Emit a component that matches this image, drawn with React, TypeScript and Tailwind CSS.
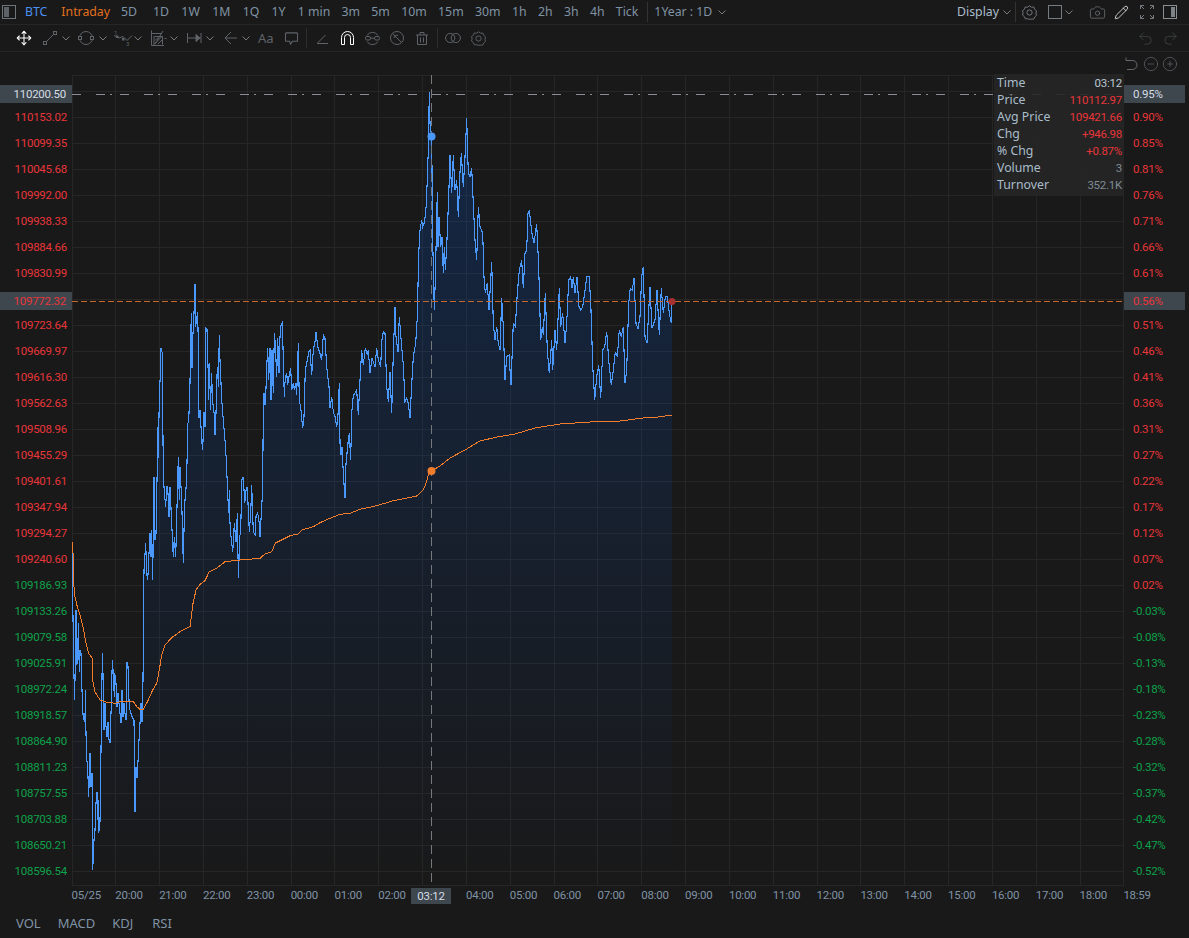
import { Camera, CircleMinus, CirclePlus, Pencil, Redo2, Undo2, Move } from 'lucide-react'

const leftLabels = [
  '110153.02', '110099.35', '110045.68', '109992.00', '109938.33', '109884.66', '109830.99', '',
  '109723.64', '109669.97', '109616.30', '109562.63', '109508.96', '109455.29', '109401.61', '109347.94',
  '109294.27', '109240.60', '109186.93', '109133.26', '109079.58', '109025.91', '108972.24', '108918.57',
  '108864.90', '108811.23', '108757.55', '108703.88', '108650.21', '108596.54',
]
const rightLabels = [
  '0.90%', '0.85%', '0.81%', '0.76%', '0.71%', '0.66%', '0.61%', '',
  '0.51%', '0.46%', '0.41%', '0.36%', '0.31%', '0.27%', '0.22%', '0.17%',
  '0.12%', '0.07%', '0.02%', '-0.03%', '-0.08%', '-0.13%', '-0.18%', '-0.23%',
  '-0.28%', '-0.32%', '-0.37%', '-0.42%', '-0.47%', '-0.52%',
]
const times = [
  '05/25', '20:00', '21:00', '22:00', '23:00', '00:00', '01:00', '02:00', '', '04:00', '05:00', '06:00',
  '07:00', '08:00', '09:00', '10:00', '11:00', '12:00', '13:00', '14:00', '15:00', '16:00', '17:00', '18:00',
]
const info = [
  ['Time', '03:12', 'text-[#b9c6d2]'],
  ['Price', '110112.97', 'text-[#e8363a]'],
  ['Avg Price', '109421.66', 'text-[#e8363a]'],
  ['Chg', '+946.98', 'text-[#e8363a]'],
  ['% Chg', '+0.87%', 'text-[#e8363a]'],
  ['Volume', '3', 'text-[#7f8b96]'],
  ['Turnover', '352.1K', 'text-[#7f8b96]'],
]

// traced from the chart, 3 units per pixel
const trace = (ox: number, oy: number, s: string) => {
  const n = s.trim().split(/\s+/).map(Number)
  const out: [number, number][] = []
  for (let i = 0; i < n.length; i += 2) out.push([ox + n[i] / 3, oy + n[i + 1] / 3])
  return out
}

const pricePts = [
  ...trace(0, 540, `218 30 218 180 222 410 224 480 228 210 230 375 233 360 235 250 238 395 240 330 243 340 246 450 248 500 250 540
    253 520 255 545 256 450 258 580 260 650 264 710 266 770 270 640 273 740 276 700 277 778 278 990 282 900 285 870 288 790 291 755
    293 840 295 780 296 880 300 845 303 630 305 490 307 340 310 430 312 570 315 490 318 560 321 590 324 545 327 600 330 610 333 520
    337 360 340 400 343 470 344 400 348 430 351 500 354 460 357 490 360 520 363 550 366 450 369 530 372 490 375 520 378 540 381 365
    384 380 387 480 390 510 393 520 396 530 402 540 405 815 408 680 411 715 414 665 417 600 420 550 423 490 426 545 429 420`),
  ...trace(130, 280, `42 870 47 790 50 880 53 900 60 760 63 830 65 750 68 900 72 590 75 780 78 760 84 440 85 535 88 350 91 283 93 205 97 220
    100 590 104 650 107 680 110 620 113 620 117 710 120 620 125 730 130 830 133 770 137 830 145 530 148 660 150 560 155 660 160 850
    163 710 165 660 170 600 173 430 176 425 180 310 182 150 185 100 186 265 188 180 192 100 195 12 197 140 200 115 203 95 205 195
    207 415 210 390 213 440 216 490 218 510 222 395 225 440 228 145 232 150 236 360 238 250 242 390 244 280 246 315 250 390 253 400
    255 465 258 400 260 295 263 260 265 320 268 165 270 240 273 310 276 370 280 420 285 480 289 540 293 640 296 700 298 630 300 730
    303 770 308 815 310 790 313 730 318 785 322 700 324 830 326 895 328 770 332 760 335 600 340 590 344 670 348 630 352 620 355 690
    358 755 362 700 365 615 370 755 375 765 378 710 382 700 386 710 390 770 395 680 398 625 400 380 402 340 405 375 408 325 410 260
    413 205 416 300 420 205 423 360 426 210 430 340 433 160 436 190 440 290 443 175 447 280 450 170 453 135 457 128 460 235 463 350
    466 290 470 280 473 315 478 285 482 265 485 330 490 310 493 330 497 310 500 345 505 190 508 365 512 380 515 415 518 445 522 410
    526 270 530 250 533 235 536 215 540 210 545 285 550 210 555 185 558 155 563 200 570 220 575 240 580 165 585 175 590 260 597 320
    600 385 605 350 610 395 615 410 620 440 623 425 628 310 630 490 633 525 636 500 640 580 645 655 648 550 655 480 658 460 662 540
    665 400 670 345 675 340 680 330 685 405 690 300 695 210 700 255 706 205 712 225 715 210 720 280 726 235 735 260 740 205 745 240
    752 260 755 185 760 155 765 160 770 320 775 365 780 275 785 400 790 220 795 80 798 170 804 215 808 110 815 200 820 255 825 365
    830 355 835 370 840 415`),
  ...trace(410, 80, `5 915 10 830 17 790 22 710 26 520 30 450 35 420 38 440 42 430 47 400 50 345 55 210 58 35 60 130 65 170 68 480 73 690 76 600
    82 335 84 500 87 410 92 500 96 470 100 580 103 500 106 570 110 500 116 350 120 225 125 340 130 225 135 330 140 300 145 410 150 275
    154 220 160 320 165 230 170 115 175 280 180 290 185 265 190 370 195 480 200 540 205 380 210 440 218 460 222 590 226 640 232 610
    237 690 245 545 250 730 255 780 260 740 265 790 270 810 275 655 280 740 285 900 290 830 297 825 303 915 310 730 316 740 322 640
    328 570 335 540 340 625 345 520 350 510 354 400 358 390 365 455 372 490 380 432 386 560 392 780 397 740 400 765 406 640 412 810
    418 880 425 780 428 870 435 750 440 810 448 625 452 740 458 700 465 790 470 730 476 600 482 590 486 625 490 590 495 640 501 590
    507 680 512 690 518 680 524 640 530 590 538 590 543 690 548 855 554 960 560 890 566 855 572 955 578 810 584 800 590 755 597 850
    604 915 610 870 616 815 622 830 628 750 634 770 640 740 645 910 650 870 656 670 661 625 667 630 672 595 678 730 684 745 690 710
    695 590 700 560 705 770 711 790 720 620 726 745 735 720 741 630 748 765 754 625 760 700 766 650 772 650 778 700 784 730 786 670`),
]

const avgPts = [
  ...trace(0, 540, `218 5 222 140 225 170 232 200 240 225 250 265 258 310 266 340 277 355 278 420 285 455 300 480 320 487 345 490 365 484
    400 484 410 500 420 508 430 508 445 480 458 450 470 430 478 390 485 345 495 315 515 293 540 275 570 260 578 195 588 150 600 133
    615 122 628 95 650 85 675 65 720 60 780 55 795 42 815 35 825 12`),
  ...trace(130, 280, `435 790 480 767 505 762 515 750 550 740 570 728 600 715 630 703 660 700 690 688 740 677 790 662 860 648 880 630 890 605 897 575`),
  [431, 471], [440, 466], [450, 458], [465, 450], [480, 441], [497, 437], [515, 434], [535, 428], [560, 424], [590, 422], [620, 421],
  [643, 418], [658, 417], [672, 415],
] as [number, number][]

const toPath = (pts: [number, number][]) => pts.map(([x, y], i) => `${i ? 'L' : 'M'}${x.toFixed(1)} ${y.toFixed(1)}`).join(' ')
const pricePath = toPath(pricePts)
const areaPath = `${pricePath} L672 886 L73 886 Z`

const hLines = Array.from({ length: 31 }, (_, i) => 91.5 + i * 26)
const vLines = Array.from({ length: 25 }, (_, i) => Math.floor(72 + i * 43.83) + 0.5)

function Chev({ className = '' }: { className?: string }) {
  return (
    <svg viewBox="0 0 8 5" fill="none" stroke="#767b80" className={`w-[8px] h-[5px] shrink-0 ${className}`}>
      <path d="M.5.5 4 4 7.5.5" />
    </svg>
  )
}

function Gear({ className = '' }: { className?: string }) {
  return (
    <svg viewBox="0 0 16 16" fill="none" stroke="currentColor" strokeLinejoin="round" className={`shrink-0 ${className}`}>
      <path d="M8 .8 10 2.3l2.6-.1.9 2.4 2 1.7-.7 2.5.7 2.3-2 1.7-.9 2.2-2.6.1L8 15.2l-2-.5-2.6-.1-.9-2.2-2-1.7.7-2.3L.5 6l2-1.4.9-2.4L6 2.3Z" />
      <circle cx="8" cy="8" r="2.8" />
    </svg>
  )
}

function Toolbar() {
  return (
    <div className="h-[25px] shrink-0 flex items-center border-b border-[#262626] text-[12.3px] text-[#8093a5]">
      <svg viewBox="0 0 14 14" className="w-[14px] h-[14px] ml-[2px] shrink-0">
        <rect x="0.5" y="0.5" width="13" height="13" fill="none" stroke="#6e747a" />
        <rect x="2" y="2" width="5" height="10" fill="#5c6268" />
      </svg>
      <span className="ml-[9px] text-[#4a90f0]">BTC</span>
      <span className="ml-[14px] text-[#e2701d]">Intraday</span>
      <span className="ml-[11px] mr-[4px]">5D</span>
      <div className="flex gap-[12.3px] ml-3">
        {['1D', '1W', '1M', '1Q', '1Y', '1 min'].map((t) => (
          <span key={t}>{t}</span>
        ))}
      </div>
      <div className="flex gap-[11.35px] ml-[11px]">
        {['3m', '5m', '10m', '15m', '30m', '1h', '2h', '3h', '4h', 'Tick'].map((t) => (
          <span key={t}>{t}</span>
        ))}
      </div>
      <div className="w-px h-[20px] bg-[#333] ml-[9px]" />
      <span className="ml-[6px]">1Year : 1D</span>
      <Chev className="ml-[6px]" />
      <span className="ml-auto text-[#a9bccb]">Display</span>
      <Chev className="ml-[4px]" />
      <div className="w-px h-[20px] bg-[#333] ml-[4px]" />
      <Gear className="w-[15px] h-[15px] ml-[6px] text-[#767b80]" />
      <svg viewBox="0 0 14 14" className="w-[14px] h-[14px] ml-[11px] shrink-0">
        <rect x="0.5" y="0.5" width="13" height="13" fill="none" stroke="#767b80" />
      </svg>
      <Chev className="ml-[3px]" />
      <Camera strokeWidth={1} className="w-[17px] h-[17px] ml-[16px] shrink-0 text-[#767b80]" />
      <Pencil strokeWidth={1.2} className="w-[15px] h-[15px] ml-[8px] shrink-0 text-white" />
      <svg viewBox="0 0 14 14" fill="none" stroke="#767b80" className="w-[14px] h-[14px] ml-[11px] shrink-0">
        <path d="M.5 4V.5H4M10 .5h3.5V4M.5 10v3.5H4M10 13.5h3.5V10M1 1l3 3M13 1l-3 3M1 13l3-3M13 13l-3-3" />
      </svg>
      <svg viewBox="0 0 14 14" className="w-[14px] h-[14px] ml-[9px] mr-[12px] shrink-0">
        <rect x="0.5" y="0.5" width="13" height="13" fill="none" stroke="#8a8f94" />
        <rect x="8" y="2" width="4" height="10" fill="#7d8287" />
      </svg>
    </div>
  )
}

function DrawingTools() {
  const c = 'shrink-0 text-[#5f6368]'
  return (
    <div className="h-[27px] shrink-0 flex items-center border-b border-[#262626]">
      <Move strokeWidth={1.6} className="w-[16px] h-[16px] ml-[16px] shrink-0 text-white" />
      <svg viewBox="0 0 14 14" fill="none" stroke="currentColor" className={`w-[14px] h-[14px] ml-[11px] ${c}`}>
        <rect x="0.5" y="10.5" width="3" height="3" />
        <rect x="10.5" y="0.5" width="3" height="3" />
        <path d="M3.5 10.5l7-7" />
      </svg>
      <Chev className="ml-[5px]" />
      <svg viewBox="0 0 16 16" fill="none" stroke="currentColor" className={`w-[16px] h-[16px] ml-[8px] ${c}`}>
        <circle cx="8" cy="8" r="6.5" />
        <rect x="0.5" y="6.5" width="3" height="3" fill="#191919" />
        <rect x="12.5" y="6.5" width="3" height="3" fill="#191919" />
      </svg>
      <Chev className="ml-[5px]" />
      <svg viewBox="0 0 20 16" fill="none" stroke="currentColor" className={`w-[20px] h-[16px] ml-[6px] ${c}`}>
        <path d="M1 5.5 6 8l4-1.5 4 4 5-5" />
        <rect x="9" y="8" width="2.5" height="2.5" fill="currentColor" stroke="none" />
        <rect x="3" y="5.5" width="2.5" height="2.5" fill="currentColor" stroke="none" />
        <text x="1" y="4.5" fontSize="6" fill="currentColor" stroke="none" fontFamily="Roboto, sans-serif">1</text>
        <text x="13" y="15.5" fontSize="6" fill="currentColor" stroke="none" fontFamily="Roboto, sans-serif">3</text>
      </svg>
      <Chev className="ml-[1px]" />
      <svg viewBox="0 0 16 16" fill="none" stroke="currentColor" className={`w-[16px] h-[16px] ml-[9px] ${c}`}>
        <path d="M.5.5v15h12.5M.5 3.5h10M3 15V6M3.5 6.5h8v8M3.5 14l8-8M4 10.5l3-3M7 14l4-4M12 1l-8 13M13.5 8.5h2" />
      </svg>
      <Chev className="ml-[3px]" />
      <svg viewBox="0 0 15 14" fill="none" stroke="currentColor" className={`w-[15px] h-[14px] ml-[9px] ${c}`}>
        <path d="M.5 2v10M.5 7h13M14 2v10" />
        <path d="M9 3.5 13 7l-4 3.5Z" fill="currentColor" />
      </svg>
      <Chev className="ml-[4px]" />
      <svg viewBox="0 0 13 14" fill="none" stroke="currentColor" className={`w-[13px] h-[14px] ml-[10px] ${c}`}>
        <path d="M13 7H1M7 1 1 7l6 6" />
      </svg>
      <Chev className="ml-[5px]" />
      <span className="w-[15px] ml-[8px] text-[13px] leading-none text-[#5f6368] shrink-0">Aa</span>
      <svg viewBox="0 0 14 14" fill="none" stroke="currentColor" strokeWidth="1.2" className={`w-[13px] h-[13px] ml-[12px] ${c}`}>
        <path d="M1.5 1h11a1 1 0 0 1 1 1v7a1 1 0 0 1-1 1H8l-2 3-1-3H1.5a1 1 0 0 1-1-1V2a1 1 0 0 1 1-1Z" />
      </svg>
      <div className="w-px h-[20px] bg-[#2e2e2e] ml-[8px] shrink-0" />
      <svg viewBox="0 0 11 11" fill="none" stroke="currentColor" className={`w-[11px] h-[11px] ml-[10px] ${c}`}>
        <path d="M0 10.5h11M.5 10l8-8" />
      </svg>
      <svg viewBox="0 0 13 14" fill="none" stroke="white" className="w-[13px] h-[14px] ml-[13px] shrink-0">
        <path d="M.5 13.5V6.5a6 6 0 0 1 12 0v7H9.5V6.5a3 3 0 0 0-6 0v7Z" />
      </svg>
      <svg viewBox="0 0 15 15" fill="none" stroke="currentColor" className={`w-[15px] h-[15px] ml-[11px] ${c}`}>
        <path d="M2 4.5a6.5 6.5 0 0 1 11 0M2 10.5a6.5 6.5 0 0 0 11 0" />
        <rect x="0.5" y="5.5" width="5" height="3.5" rx="1.5" />
        <rect x="9.5" y="5.5" width="5" height="3.5" rx="1.5" />
        <path d="M5.5 7.2h4" />
      </svg>
      <svg viewBox="0 0 14 14" fill="none" stroke="currentColor" className={`w-[14px] h-[14px] ml-[10px] ${c}`}>
        <circle cx="7" cy="7" r="6.5" />
        <path d="M2.5 2.5l9 9M4 7a3 3 0 0 1 4-2.6" />
      </svg>
      <svg viewBox="0 0 12 13" fill="none" stroke="currentColor" className={`w-[12px] h-[13px] ml-[12px] ${c}`}>
        <path d="M0 3h12M4 3V.5h4V3M1.5 3v9.5h9V3M4.5 5.5v5M7.5 5.5v5" />
      </svg>
      <div className="w-px h-[20px] bg-[#2e2e2e] ml-[9px] shrink-0" />
      <svg viewBox="0 0 16 10" fill="none" stroke="currentColor" className={`w-[16px] h-[10px] ml-[7px] ${c}`}>
        <circle cx="5.2" cy="5" r="4.6" />
        <circle cx="10.8" cy="5" r="4.6" />
      </svg>
      <Gear className="w-[15px] h-[15px] ml-[10px] text-[#5f6368]" />
      <div className="ml-auto mr-[10px] flex gap-2 text-[#3f4245]">
        <Undo2 strokeWidth={1.2} className="w-[17px] h-[17px]" />
        <Redo2 strokeWidth={1.2} className="w-[17px] h-[17px]" />
      </div>
    </div>
  )
}

function PriceChart() {
  return (
    <svg viewBox="72 75 1052 811" className="w-[1052px] h-[811px] block">
      <defs>
        <linearGradient id="area" gradientUnits="userSpaceOnUse" x1="0" y1="92" x2="0" y2="886">
          <stop offset="0" stopColor="#005ae6" stopOpacity="0.22" />
          <stop offset="1" stopColor="#005ae6" stopOpacity="0" />
        </linearGradient>
      </defs>
      <g stroke="#262626" shapeRendering="crispEdges">
        <path d="M72 75.5H1124M72 885.5H1124M1123.5 75V886" fill="none" />
        {hLines.map((y) => (
          <line key={y} x1="72" x2="1124" y1={y} y2={y} />
        ))}
        {vLines.map((x) => (
          <line key={x} x1={x} x2={x} y1="75" y2="886" />
        ))}
      </g>
      <path d={areaPath} fill="url(#area)" />
      <path d={pricePath} fill="none" stroke="#4a98fb" strokeWidth="1.1" shapeRendering="crispEdges" />
      <path d={toPath(avgPts)} fill="none" stroke="#f07c2c" strokeWidth="1" shapeRendering="crispEdges" />
      <line x1="431.5" x2="431.5" y1="75" y2="886" stroke="#75797d" strokeDasharray="9 5" shapeRendering="crispEdges" />
      <line x1="72" x2="1124" y1="94.5" y2="94.5" stroke="#8a8e92" strokeDasharray="9 15 9 5 2 8" shapeRendering="crispEdges" />
      <line x1="72" x2="1124" y1="301.5" y2="301.5" stroke="#c9682c" strokeDasharray="6 3" shapeRendering="crispEdges" />
      <circle cx="431.5" cy="136.5" r="4" fill="#4a98fb" />
      <circle cx="431.5" cy="471" r="4" fill="#f07c2c" />
      <circle cx="672" cy="301.5" r="3.5" fill="#a83030" />
    </svg>
  )
}

export default function App() {
  return (
    <div className="w-full h-screen overflow-hidden flex flex-col bg-[#191919] font-['Noto_Sans',sans-serif]">
      <Toolbar />
      <DrawingTools />
      <div className="h-[23px] shrink-0 flex items-center justify-end gap-[3px] pr-[11px] text-[#666a6f]">
        <svg viewBox="0 0 13 13" fill="none" stroke="currentColor" className="w-[13px] h-[13px] mr-[2px]">
          <path d="M1 .5v3h3M1 3.5h6.5a4.5 4.5 0 0 1 0 9H2" />
        </svg>
        <CircleMinus strokeWidth={1} className="w-[16px] h-[16px]" />
        <CirclePlus strokeWidth={1} className="w-[16px] h-[16px]" />
      </div>

      <div className="h-[811px] shrink-0 flex font-['Roboto',sans-serif] text-[11.5px] tracking-[-0.25px]">
        <div className="relative w-[72px] shrink-0 flex flex-col pt-[29px] items-end pr-[5px]">
          {leftLabels.map((p, i) => (
            <div key={i} className={`h-[26px] leading-[26px] ${i < 18 ? 'text-[#e8363a]' : 'text-[#0fa24a]'}`}>
              {p}
            </div>
          ))}
          <div className="absolute left-0 top-[10px] w-[72px] h-[18px] bg-[#3f474e] text-[#d5dde5] text-right pr-[6px] leading-[18px]">110200.50</div>
          <div className="absolute left-0 top-[217px] w-[72px] h-[18px] bg-[#3f474e] text-[#e8363a] text-right pr-[6px] leading-[18px]">109772.32</div>
        </div>

        <div className="relative w-[1052px] shrink-0">
          <PriceChart />
          <div className="absolute right-0 top-[-1px] w-[130px] h-[122px] bg-[#262626]/90 pl-[3px] pr-[2px] pt-[1px]">
            {info.map(([label, value, color]) => (
              <div key={label} className="h-[17px] flex items-center justify-between">
                <span className="text-[#a9bccb] font-['Noto_Sans',sans-serif] text-[12.3px] tracking-normal">{label}</span>
                <span className={color}>{value}</span>
              </div>
            ))}
          </div>
        </div>

        <div className="relative flex-1 flex flex-col pt-[29px] pl-[9px]">
          {rightLabels.map((p, i) => (
            <div key={i} className={`h-[26px] leading-[26px] ${i < 19 ? 'text-[#e8363a]' : 'text-[#0fa24a]'}`}>
              {p}
            </div>
          ))}
          <div className="absolute left-0 top-[10px] w-[61px] h-[18px] bg-[#3f474e] text-[#d5dde5] pl-[9px] leading-[18px]">0.95%</div>
          <div className="absolute left-0 top-[217px] w-[61px] h-[18px] bg-[#3f474e] text-[#e8363a] pl-[9px] leading-[18px]">0.56%</div>
        </div>
      </div>

      <div className="relative h-[20px] shrink-0 flex pl-[71.5px] items-center font-['Roboto',sans-serif] text-[11.5px] tracking-[-0.25px] text-[#8093a5]">
        {times.map((t, i) => (
          <span key={i} className="w-[43.83px] shrink-0">{t}</span>
        ))}
        <span>18:59</span>
        <span className="absolute left-[411px] top-[2px] w-[40px] h-[16px] bg-[#3f474e] text-[#d5dde5] text-center leading-[16px]">03:12</span>
      </div>

      <div className="flex-1 flex items-center pl-[16px] pt-[4px] gap-[17px] text-[13px] text-[#8093a5]">
        <span>VOL</span>
        <span>MACD</span>
        <span>KDJ</span>
        <span className="ml-[2px]">RSI</span>
      </div>
    </div>
  )
}
